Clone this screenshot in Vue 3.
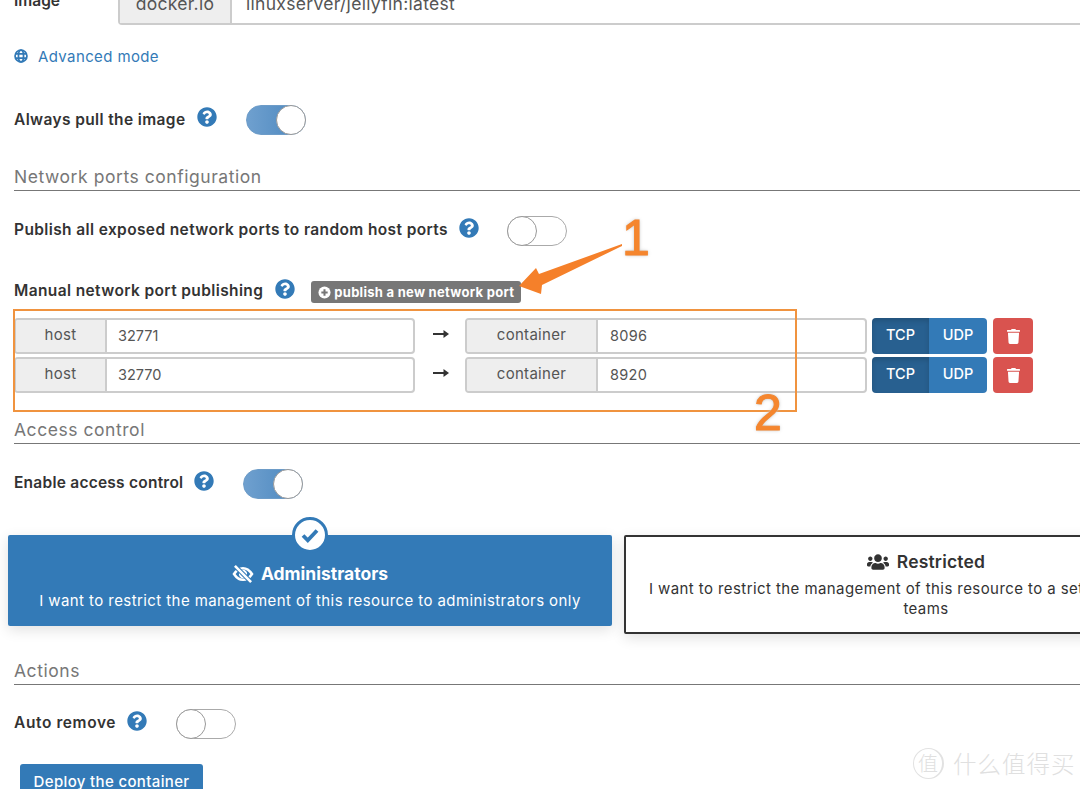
<script setup>
import { ref } from 'vue'

const ports = ref([
  { host: '32771', container: '8096' },
  { host: '32770', container: '8920' }
])

const helpPath = 'M504 256c0 136.997-111.043 248-248 248S8 392.997 8 256C8 119.083 119.043 8 256 8s248 111.083 248 248zM262.655 90c-54.497 0-89.255 22.957-116.549 63.758-3.536 5.286-2.353 12.415 2.715 16.258l34.699 26.31c5.205 3.947 12.621 3.008 16.665-2.122 17.864-22.658 30.113-35.797 57.303-35.797 20.429 0 45.698 13.148 45.698 32.958 0 14.976-12.363 22.667-32.534 33.976C247.128 238.528 216 254.941 216 296v4c0 6.627 5.373 12 12 12h56c6.627 0 12-5.373 12-12v-1.333c0-28.462 83.186-29.647 83.186-106.667 0-58.002-60.165-102-116.531-102zM256 338c-25.365 0-46 20.635-46 46 0 25.364 20.635 46 46 46s46-20.636 46-46c0-25.365-20.635-46-46-46z'
const trashPath = 'M432 32H312l-9.4-18.7A24 24 0 0 0 281.1 0H166.8a23.72 23.72 0 0 0-21.4 13.3L136 32H16A16 16 0 0 0 0 48v32a16 16 0 0 0 16 16h416a16 16 0 0 0 16-16V48a16 16 0 0 0-16-16zM53.2 467a48 48 0 0 0 47.9 45h245.8a48 48 0 0 0 47.9-45L416 128H32z'
const usersPath = 'M96 224c35.3 0 64-28.7 64-64s-28.7-64-64-64-64 28.7-64 64 28.7 64 64 64zm448 0c35.3 0 64-28.7 64-64s-28.7-64-64-64-64 28.7-64 64 28.7 64 64 64zm32 32h-64c-17.6 0-33.5 7.1-45.1 18.6 40.3 22.1 68.9 62 75.1 109.4h66c17.7 0 32-14.3 32-32v-32c0-35.3-28.7-64-64-64zm-256 0c61.9 0 112-50.1 112-112S381.9 32 320 32 208 82.1 208 144s50.1 112 112 112zm76.8 32h-8.3c-20.8 10-43.9 16-68.5 16s-47.6-6-68.5-16h-8.3C179.6 288 128 339.6 128 403.2V432c0 26.5 21.5 48 48 48h288c26.5 0 48-21.5 48-48v-28.8c0-63.6-51.6-115.2-115.2-115.2zm-223.7-13.4C161.5 263.1 145.6 256 128 256H64c-35.3 0-64 28.7-64 64v32c0 17.7 14.3 32 32 32h65.9c6.3-47.4 34.9-87.3 75.2-109.4z'
</script>

<template>
  <div class="page">
    <div class="image-row">
      <span class="image-label">Image</span>
      <div class="image-group">
        <span class="image-addon">docker.io</span>
        <span class="image-value">linuxserver/jellyfin:latest</span>
      </div>
    </div>

    <div class="advanced">
      <svg class="globe" viewBox="0 0 16 16" fill="none" stroke="#337ab7" stroke-width="2">
        <circle cx="8" cy="8" r="6.800" />
        <ellipse cx="8" cy="8" rx="2.900" ry="6.800" />
        <path d="M1.600 5.700h12.800M1.600 10.300h12.800" />
      </svg>
      <span>Advanced mode</span>
    </div>

    <div class="row always">
      <span class="label">Always pull the image</span>
      <svg class="help" viewBox="0 0 512 512"><path :d="helpPath" /></svg>
      <span class="toggle on"><i></i></span>
    </div>

    <h3 class="head network">Network ports configuration</h3>

    <div class="row publish">
      <span class="label">Publish all exposed network ports to random host ports</span>
      <svg class="help" viewBox="0 0 512 512"><path :d="helpPath" /></svg>
      <span class="toggle"><i></i></span>
    </div>

    <div class="row manual">
      <span class="label">Manual network port publishing</span>
      <svg class="help" viewBox="0 0 512 512"><path :d="helpPath" /></svg>
      <span class="badge">
        <svg viewBox="0 0 14 14"><circle cx="7" cy="7" r="6.500" fill="#fff" /><path d="M7 3.600v6.800M3.600 7h6.800" stroke="#777" stroke-width="2.200" /></svg>
        publish a new network port
      </span>
    </div>

    <div class="ports">
      <div v-for="p in ports" :key="p.host" class="port-row">
        <div class="group host">
          <span class="addon">host</span>
          <span class="value">{{ p.host }}</span>
        </div>
        <svg class="long-arrow" viewBox="0 0 16 10"><path d="M0 4h10.500V1L16 5l-5.500 4V6H0z" fill="#333" /></svg>
        <div class="group cont">
          <span class="addon">container</span>
          <span class="value">{{ p.container }}</span>
        </div>
        <div class="proto">
          <span class="tcp">TCP</span>
          <span class="udp">UDP</span>
        </div>
        <span class="trash">
          <svg viewBox="0 0 448 512"><path :d="trashPath" fill="#fff" /></svg>
        </span>
      </div>
    </div>

    <h3 class="head access">Access control</h3>

    <div class="row enable">
      <span class="label">Enable access control</span>
      <svg class="help" viewBox="0 0 512 512"><path :d="helpPath" /></svg>
      <span class="toggle on"><i></i></span>
    </div>

    <div class="cards">
      <div class="card admin">
        <span class="check">
          <svg viewBox="0 0 20 20" fill="none" stroke="#337ab7" stroke-width="3.800"><path d="M3 10.500l4.800 4.800L17 5.500" /></svg>
        </span>
        <div class="card-title">
          <svg class="eye" viewBox="0 0 24 20" fill="none" stroke="#fff" stroke-width="2.800">
            <path d="M2 10c3-4.500 6.200-6.500 10-6.500S19 5.500 22 10c-3 4.500-6.200 6.500-10 6.500S5 14.500 2 10z" />
            <circle cx="12" cy="10" r="3.200" />
            <path d="M3 1l18 18" stroke="#337ab7" stroke-width="5" />
            <path d="M3 1l18 18" />
          </svg>
          Administrators
        </div>
        <p>I want to restrict the management of this resource to administrators only</p>
      </div>
      <div class="card restricted">
        <div class="card-title">
          <svg class="users" viewBox="0 0 640 512"><path :d="usersPath" fill="#333" /></svg>
          Restricted
        </div>
        <p>I want to restrict the management of this resource to a set of users and/or teams</p>
      </div>
    </div>

    <h3 class="head actions">Actions</h3>

    <div class="row auto">
      <span class="label">Auto remove</span>
      <svg class="help" viewBox="0 0 512 512"><path :d="helpPath" /></svg>
      <span class="toggle"><i></i></span>
    </div>

    <button class="deploy">Deploy the container</button>

    <!-- annotations drawn over the screenshot -->
    <div class="note-box"></div>
    <svg class="note-arrow" viewBox="0 0 104 54">
      <path d="M0 44L17 26l3 6L103 2v2L23 43l-1 9z" fill="#f5802a" />
    </svg>
    <span class="digit one">1</span>
    <span class="digit two">2</span>

    <div class="watermark">
      <span class="wm-circle">值</span>
      <span class="wm-text">什么值得买</span>
    </div>
  </div>
</template>

<style scoped>
.page {
  position: relative;
  height: 789px;
  overflow: hidden;
  background: #fff;
  color: #333;
  padding-left: 14px;
  font-family: Inter, "Noto Sans", sans-serif;
  font-size: 15.500px;
}

.image-row {
  display: flex;
  align-items: center;
  height: 38px;
  margin-top: -14px;
}

.image-label {
  width: 104px;
  font-weight: 600;
  position: relative;
  top: -5px;
}

.image-group {
  flex: 1;
  display: flex;
  box-sizing: border-box;
  border: 2px solid #ccc;
  border-right: none;
  border-radius: 4px 0 0 4px;
  height: 39px;
  font-size: 17.500px;
  letter-spacing: 0.3px;
  line-height: 32px;
}

.image-addon {
  width: 110px;
  background: #eee;
  border-right: 2px solid #ccc;
  text-align: center;
  color: #555;
}

.image-value {
  padding-left: 14px;
  color: #555;
}

.advanced {
  display: flex;
  align-items: center;
  height: 20px;
  margin-top: 22px;
  color: #337ab7;
  font-size: 15px;
  letter-spacing: 0.38px;
}

.globe {
  width: 14px;
  height: 14px;
  margin-right: 10px;
}

.row {
  display: flex;
  align-items: center;
  height: 30px;
}

.label {
  font-weight: 600;
  color: #333;
  letter-spacing: 0.38px;
  margin-bottom: 4px;
}

.help {
  width: 20px;
  height: 20px;
  fill: #337ab7;
  margin-left: 11px;
  position: relative;
  top: -3px;
}

.toggle {
  display: block;
  position: relative;
  box-sizing: border-box;
  width: 60px;
  height: 30px;
  border: 1px solid #aaa;
  border-radius: 15px;
  margin-left: 29px;
  background: #fff;
}

.toggle i {
  position: absolute;
  left: -1px;
  top: -1px;
  width: 30px;
  height: 30px;
  box-sizing: border-box;
  border: 1px solid #999;
  border-radius: 50%;
  background: #fff;
}

.toggle.on {
  background: linear-gradient(90deg, #6fa0cf, #4a86bd);
  border-color: #6d9cc8;
}

.toggle.on i {
  left: auto;
  right: -1px;
}

.always {
  margin-top: 39px;
}

.always .label {
  margin-bottom: 2px;
}

.head {
  margin: 0;
  height: 26px;
  line-height: 26px;
  border-bottom: 1.500px solid #777;
  color: #777;
  font-size: 17.500px;
  letter-spacing: 0.55px;
  font-weight: 400;
  box-sizing: content-box;
}

.network {
  margin-top: 29px;
}

.publish {
  margin-top: 25px;
}

.publish .toggle {
  margin-left: 28px;
}

.manual {
  margin-top: 35px;
  height: 22px;
}

.manual .label {
  margin-bottom: 3px;
}

.manual .help {
  margin-left: 12px;
}

.badge {
  display: flex;
  align-items: center;
  height: 22px;
  margin-left: 16px;
  padding: 0 7px;
  border-radius: 3px;
  background: #777;
  color: #fff;
  font-size: 13px;
  letter-spacing: 0.28px;
  font-weight: 700;
  white-space: nowrap;
}

.badge svg {
  width: 13px;
  height: 13px;
  margin-right: 3px;
}

.ports {
  margin-top: 15px;
  display: flex;
  flex-direction: column;
  gap: 3px;
}

.port-row {
  display: flex;
  align-items: center;
  height: 36px;
}

.group {
  display: flex;
  box-sizing: border-box;
  height: 36px;
  border: 2px solid #ccc;
  border-radius: 4px;
  line-height: 32px;
  font-size: 14.500px;
  overflow: hidden;
}

.group.host {
  width: 401px;
}

.group.cont {
  width: 402px;
}

.addon {
  background: #eee;
  border-right: 2px solid #ccc;
  color: #555;
  text-align: center;
  line-height: 29px;
  font-size: 15px;
  letter-spacing: 0.3px;
}

.host .addon {
  width: 89px;
}

.cont .addon {
  width: 129px;
}

.value {
  padding-left: 11px;
  color: #555;
}

.cont .value {
  padding-left: 12px;
  letter-spacing: 0.3px;
}

.long-arrow {
  width: 16px;
  height: 10px;
  margin: -4px 16px 0 18px;
}

.proto {
  display: flex;
  height: 36px;
  margin-left: 5px;
  border-radius: 4px;
  overflow: hidden;
  color: #fff;
  font-size: 14.500px;
  font-weight: 500;
  line-height: 34px;
  text-align: center;
}

.tcp {
  width: 57px;
  background: #286090;
  box-shadow: inset 0 3px 5px rgba(0, 0, 0, 0.15);
}

.udp {
  width: 58px;
  background: #337ab7;
}

.trash {
  display: flex;
  align-items: center;
  justify-content: center;
  width: 40px;
  height: 36px;
  margin-left: 6px;
  border-radius: 4px;
  background: #d9534f;
}

.trash svg {
  width: 13px;
  height: 15px;
}

.access {
  margin-top: 24px;
}

.enable {
  margin-top: 25px;
}

.enable .label {
  letter-spacing: 0.24px;
}

.cards {
  display: flex;
  align-items: flex-start;
  gap: 12px;
  margin: 36px 0 0 -6px;
  width: 1300px;
}

.card {
  box-sizing: border-box;
  position: relative;
  width: 604px;
  flex: none;
  border-radius: 2px;
  text-align: center;
  box-shadow: 0 4px 14px rgba(0, 0, 0, 0.12);
}

.card p {
  margin: 0;
  font-size: 15px;
  letter-spacing: 0.42px;
  line-height: 20px;
}

.card-title {
  display: flex;
  align-items: center;
  justify-content: center;
  font-size: 17.500px;
  font-weight: 600;
}

.admin {
  height: 91px;
  padding-top: 28px;
  background: #337ab7;
  color: #fff;
}

.admin .card-title {
  font-weight: 700;
  margin-bottom: 7px;
}

.check {
  position: absolute;
  left: 284px;
  top: -18px;
  display: flex;
  align-items: center;
  justify-content: center;
  box-sizing: border-box;
  width: 36px;
  height: 36px;
  border: 3px solid #337ab7;
  border-radius: 50%;
  background: #fff;
}

.check svg {
  width: 20px;
  height: 20px;
}

.eye {
  width: 22px;
  height: 18px;
  margin-right: 7px;
}

.restricted {
  height: 99px;
  padding: 14px 16px 0;
  background: #fff;
  border: 2px solid #333;
}

.restricted .card-title {
  margin-bottom: 7px;
  letter-spacing: 0.2px;
}

.users {
  width: 22px;
  height: 18px;
  margin-right: 8px;
}

.actions {
  margin-top: 24px;
}

.auto {
  margin-top: 24px;
}

.auto .label {
  letter-spacing: 0.6px;
}

.deploy {
  display: block;
  margin: 25px 0 0 6px;
  width: 183px;
  height: 34px;
  border: none;
  border-radius: 3px;
  background: #337ab7;
  color: #fff;
  font-family: inherit;
  font-size: 15px;
  letter-spacing: 0.35px;
  font-weight: 500;
  padding: 0;
}

.note-box {
  position: absolute;
  left: 13px;
  top: 309px;
  box-sizing: border-box;
  width: 784px;
  height: 103px;
  border: 2px solid #f0933f;
}

.note-arrow {
  position: absolute;
  left: 519px;
  top: 242px;
  width: 104px;
  height: 54px;
}

.digit {
  position: absolute;
  color: #f5862e;
  font-family: "Liberation Sans", sans-serif;
  font-size: 50px;
  font-weight: 400;
  line-height: 50px;
  -webkit-text-stroke: 1px #f5862e;
  text-shadow: 0 0 2px #bbb, 0 0 4px #ccc;
}

.one {
  left: 622px;
  top: 213px;
}

.two {
  left: 754px;
  top: 388px;
}

.watermark {
  position: absolute;
  left: 913px;
  top: 746px;
  display: flex;
  align-items: center;
  color: #e0e0e0;
  font-family: "Noto Sans CJK SC", sans-serif;
  font-weight: 300;
}

.wm-circle {
  display: block;
  box-sizing: border-box;
  width: 31px;
  height: 31px;
  border: 1px solid #e2e2e2;
  border-right-width: 2px;
  border-radius: 50%;
  font-size: 20px;
  line-height: 28px;
  text-align: center;
}

.wm-text {
  margin-left: 9px;
  font-size: 23.500px;
  letter-spacing: 1px;
}
</style>

<style>
html,
body {
  margin: 0;
  background: #fff;
}
</style>
